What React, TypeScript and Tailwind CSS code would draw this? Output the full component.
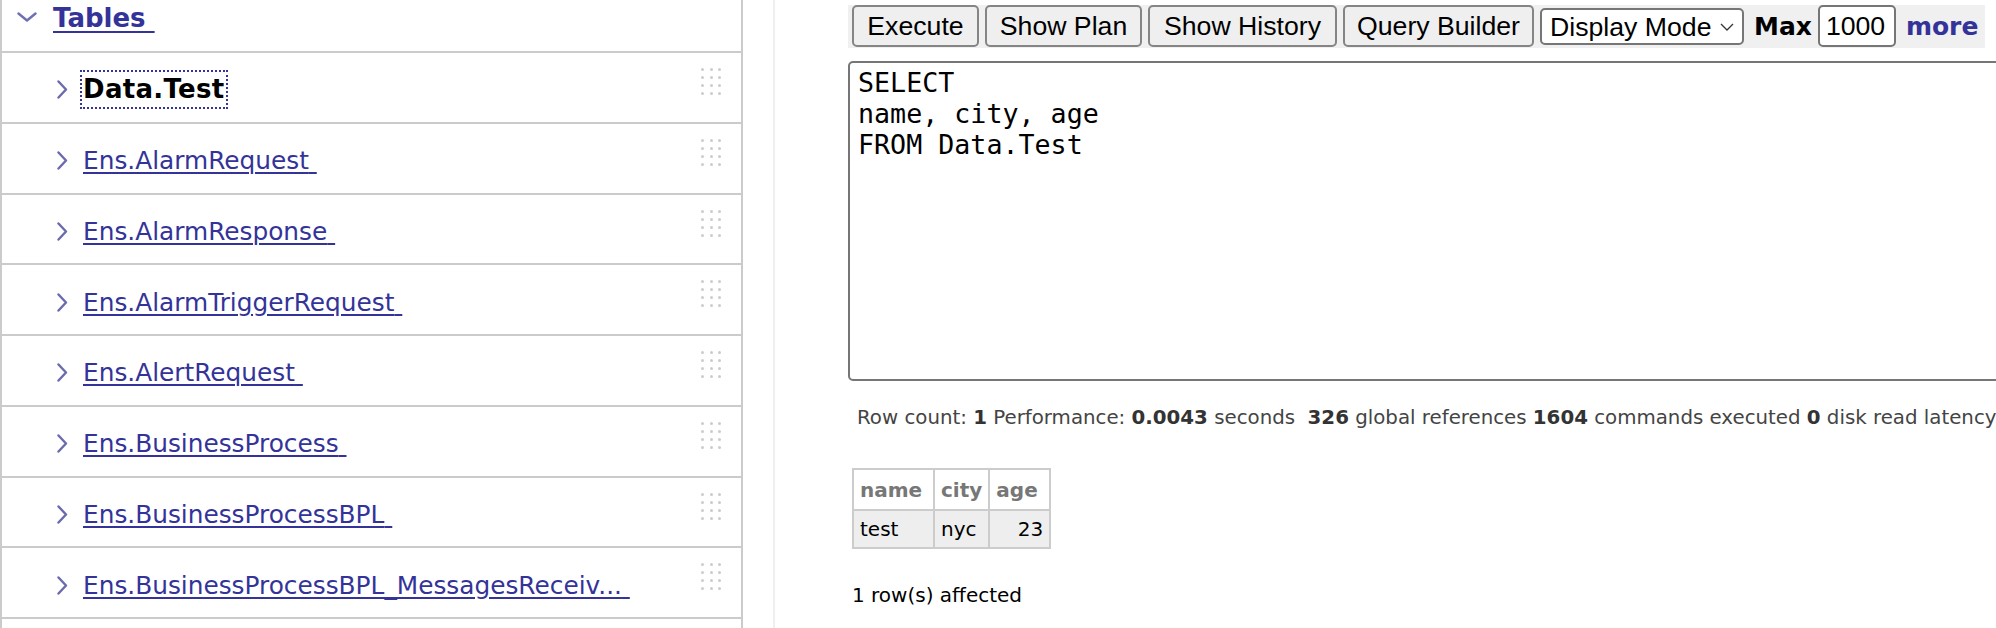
const tables = [
  "Data.Test",
  "Ens.AlarmRequest",
  "Ens.AlarmResponse",
  "Ens.AlarmTriggerRequest",
  "Ens.AlertRequest",
  "Ens.BusinessProcess",
  "Ens.BusinessProcessBPL",
  "Ens.BusinessProcessBPL_MessagesReceiv...",
  "",
];

const futura = "font-['DejaVu_Sans',sans-serif]";
const arial = "font-['Liberation_Sans',Arial,sans-serif]";

function Grip() {
  return (
    <div className="grid grid-cols-3 gap-x-[5.5px] gap-y-[5px]">
      {Array.from({ length: 12 }).map((_, i) => (
        <span key={i} className="size-[3px] rounded-full bg-[#cccccc]" />
      ))}
    </div>
  );
}

function ChevronRight() {
  return (
    <svg width="11" height="19" viewBox="0 0 11 19" fill="none" className="shrink-0">
      <polyline points="1.5,1.5 9,9.5 1.5,17.5" stroke="#6a6aae" strokeWidth="2.4" strokeLinecap="round" strokeLinejoin="round" />
    </svg>
  );
}

function TableRow({ name, active }: { name: string; active?: boolean }) {
  if (!name) {
    return <div className="h-[70.75px] shrink-0 border-t-2 border-[#cbcbcb]" />;
  }
  return (
    <div className="flex h-[70.75px] shrink-0 border-t-2 border-[#cbcbcb] pl-[55px] pr-[20px]">
      <div className="flex flex-1 items-center pt-[5px]">
        <ChevronRight />
        {active ? (
          <span className="ml-[15px] text-[26px] leading-[33px] font-bold tracking-[0.3px] text-black outline-2 outline-offset-[1px] outline-dotted outline-[#333399]">
            {name}
          </span>
        ) : (
          <a href="#" className="ml-[15px] text-[24.8px] leading-[33px] text-[#333399] underline decoration-2 underline-offset-[3px]">
            {name}&nbsp;
          </a>
        )}
      </div>
      <div className="mt-[15px] self-start">
        <Grip />
      </div>
    </div>
  );
}

function ToolButton({ label, width }: { label: string; width: string }) {
  return (
    <button className={`${width} h-[42px] rounded-[5px] border-2 border-[#858585] bg-[#efefef] text-center text-[26.67px] leading-none text-black ${arial}`}>
      {label}
    </button>
  );
}

export default function App() {
  return (
    <div className={`flex h-[628px] w-[1996px] overflow-hidden bg-white ${futura}`}>
      {/* tree panel */}
      <div className="flex h-full w-[743px] shrink-0 flex-col border-x-2 border-[#cbcbcb]">
        <div className="flex h-[51px] shrink-0 items-start pl-[15px]">
          <svg width="20" height="10" viewBox="0 0 20 10" fill="none" className="mt-[12px] shrink-0">
            <polyline points="1.5,1.5 10,8.5 18.5,1.5" stroke="#6f6fb2" strokeWidth="2.4" strokeLinecap="round" strokeLinejoin="round" />
          </svg>
          <a href="#" className="ml-[16px] mt-[3px] text-[26px] leading-[30px] font-bold text-[#333399] underline decoration-2 underline-offset-[4px]">
            Tables&nbsp;
          </a>
        </div>
        {tables.map((t, i) => (
          <TableRow key={i} name={t} active={i === 0} />
        ))}
      </div>

      <div className="w-[30px] shrink-0" />

      {/* query pane */}
      <div className="flex-1 border-l-2 border-[#efefef] pl-[73px] pt-[5px]">
        <div className="inline-flex h-[43px] items-start gap-[6px] bg-[#f0f0f0] pl-[4px] pr-[7px]">
          <ToolButton label="Execute" width="w-[127px]" />
          <ToolButton label="Show Plan" width="w-[157px]" />
          <ToolButton label="Show History" width="w-[189px]" />
          <ToolButton label="Query Builder" width="w-[191px]" />
          <div className={`mt-[3px] flex h-[37px] w-[204px] items-center justify-between rounded-[5px] border-2 border-[#767676] bg-white pl-[8px] pr-[8px] text-[26.67px] text-black ${arial}`}>
            <span>Display Mode</span>
            <svg width="14" height="8" viewBox="0 0 14 8" fill="none">
              <polyline points="1,1 7,7 13,1" stroke="#333" strokeWidth="1.3" />
            </svg>
          </div>
          <span className="ml-[4px] self-center text-[25px] font-bold text-black">Max</span>
          <div className={`h-[42px] w-[78px] rounded-[5px] border-2 border-[#767676] bg-white pl-[6px] text-[26.67px] leading-[38px] text-black ${arial}`}>
            1000
          </div>
          <a href="#" className="ml-[4px] self-center text-[25px] font-bold text-[#333399]">more</a>
        </div>

        <div className="mt-[13px] h-[320px] w-[1200px] whitespace-pre rounded-[5px] border-2 border-[#767676] pl-[8px] pt-[4px] font-['DejaVu_Sans_Mono',monospace] text-[26.67px] leading-[31px] text-black">
          {"SELECT\nname, city, age\nFROM Data.Test"}
        </div>

        <div className="ml-[4px]">
          <div className="mt-[23px] whitespace-pre pl-[5px] text-[19.8px] leading-[28px] text-[#444]">
            Row count: <b className="text-[#333]">1</b> Performance: <b className="text-[#333]">0.0043</b> seconds  <b className="text-[#333]">326</b> global references <b className="text-[#333]">1604</b> commands executed <b className="text-[#333]">0</b> disk read latency
          </div>

          <table className="mt-[36px] border-collapse text-[20px]">
            <thead>
              <tr className="h-[41px] bg-white">
                <th className="w-[81px] border-2 border-[#cccccc] px-[6px] text-left font-bold text-[#777]">name</th>
                <th className="w-[55px] border-2 border-[#cccccc] px-[6px] text-left font-bold text-[#777]">city</th>
                <th className="w-[61px] border-2 border-[#cccccc] px-[6px] text-left font-bold text-[#777]">age</th>
              </tr>
            </thead>
            <tbody>
              <tr className="h-[38px] bg-[#eeeeee]">
                <td className="border-2 border-[#cccccc] px-[6px] text-black">test</td>
                <td className="border-2 border-[#cccccc] px-[6px] text-black">nyc</td>
                <td className="border-2 border-[#cccccc] px-[6px] text-right text-black">23</td>
              </tr>
            </tbody>
          </table>

          <div className="mt-[32px] text-[20px] leading-[28px] text-black">1 row(s) affected</div>
        </div>
      </div>
    </div>
  );
}
